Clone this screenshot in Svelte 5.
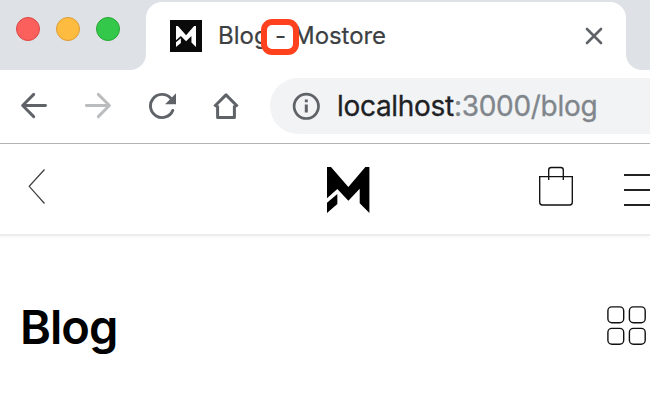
<script>
  const lights = [
    { fill: '#fc605c', edge: '#dd4744' },
    { fill: '#fdbc40', edge: '#dc9c33' },
    { fill: '#34c84a', edge: '#24a732' }
  ];
  const mark =
    'M0 0H12L64 60L115 0H127V138L98 109V65L64 101L31 66L0 94ZM0 107L31 81V111L0 138Z';
</script>

<div class="window">
  <div class="strip">
    <div class="lights">
      {#each lights as l}
        <span class="light" style="background:{l.fill};border-color:{l.edge}"></span>
      {/each}
    </div>
    <svg class="flare" width="16" height="16" viewBox="0 0 16 16"><path d="M16 0V16H0A16 16 0 0 0 16 0Z" fill="#fff" /></svg>
    <div class="tab">
      <span class="favicon">
        <svg width="20" height="21" viewBox="0 0 127 138" preserveAspectRatio="none"><path d={mark} fill="#fff" /></svg>
      </span>
      <span class="title"><span class="w1">Blog</span><i class="marker"></i><span class="dash">-</span><span class="w2">Mostore</span></span>
      <svg class="close" width="18" height="18" viewBox="0 0 18 18"><path d="M2 2L16 16M16 2L2 16" stroke="#5f6368" stroke-width="2.6" stroke-linecap="round" /></svg>
    </div>
    <svg class="flare" width="16" height="16" viewBox="0 0 16 16"><path d="M0 0V16H16A16 16 0 0 1 0 0Z" fill="#fff" /></svg>
  </div>

  <div class="toolbar">
    <svg width="28" height="28" viewBox="0 0 28 28"><path d="M25.5 13.5H3.2M13.7 2.4L2.6 13.5L13.7 24.6" fill="none" stroke="#5f6368" stroke-width="2.9" stroke-linecap="round" stroke-linejoin="round" /></svg>
    <svg width="28" height="28" viewBox="0 0 28 28"><path d="M2.3 13.5H25M14.3 2.4L25.4 13.5L14.3 24.6" fill="none" stroke="#babcbe" stroke-width="2.9" stroke-linecap="round" stroke-linejoin="round" /></svg>
    <svg width="28" height="28" viewBox="0 0 28 28"><path d="M24.8 18.4A11.6 11.6 0 1 1 22.5 6" fill="none" stroke="#5f6368" stroke-width="2.9" stroke-linecap="round" /><path d="M28 1.3V12.2H17.1Z" fill="#5f6368" /></svg>
    <svg width="28" height="28" viewBox="0 0 28 28"><path d="M5.6 13.4V25.5H22.4V13.4M2.4 14.5L14 2.9L25.6 14.5" fill="none" stroke="#5f6368" stroke-width="3" stroke-linecap="butt" stroke-linejoin="round" /></svg>
    <div class="omnibox">
      <svg width="28" height="28" viewBox="0 0 28 28"><circle cx="14.3" cy="14.3" r="12.2" fill="none" stroke="#5f6368" stroke-width="2.7" /><path d="M12.8 7.5H15.8V10.3H12.8ZM12.8 12.6H15.8V20.5H12.8Z" fill="#5f6368" /></svg>
      <span class="url"><span class="host">localhost</span><span class="path">:3000/blog</span></span>
    </div>
  </div>

  <header>
    <svg class="back" width="18" height="38" viewBox="0 0 18 38"><path d="M16.5 2.5L1.2 19.3L16.5 36.5" fill="none" stroke="#3c3c3c" stroke-width="1.2" /></svg>
    <svg class="logo" width="42.4" height="46" viewBox="0 0 127 138" preserveAspectRatio="none"><path d={mark} /></svg>
    <svg class="bag" width="36" height="42" viewBox="0 0 36 42"><path d="M1.7 10.6H34.3V36.3Q34.3 39 31.6 39H4.4Q1.7 39 1.7 36.3ZM10.7 14V4.1Q10.7 1.5 13.3 1.5H22.7Q25.3 1.5 25.3 4.1V14" fill="none" stroke="#111" stroke-width="1.35" /></svg>
    <span class="menu"><i></i><i></i><i></i></span>
  </header>

  <main>
    <h1>Blog</h1>
    <svg class="grid" width="40" height="40" viewBox="0 0 40 40" fill="none" stroke="#111" stroke-width="1.4">
      {#each [0.9, 22.4] as y}
        {#each [0.9, 22.4] as x}
          <rect {x} {y} width="15.8" height="15.8" rx="4" />
        {/each}
      {/each}
    </svg>
  </main>
</div>

<style>
  .window { width: 650px; height: 414px; overflow: hidden; background: #fff; font-family: Inter, "Liberation Sans", sans-serif; }
  svg { display: block; flex: none; }
  .strip { height: 70px; background: #dee1e6; display: flex; align-items: flex-end; box-sizing: border-box; }
  .lights { width: 130px; height: 53px; padding-left: 16px; box-sizing: border-box; display: flex; gap: 16px; flex: none; align-self: flex-start; padding-top: 17px; }
  .light { width: 24px; height: 24px; border-radius: 50%; border: 1px solid; box-sizing: border-box; flex: none; }
  .tab { width: 480px; height: 68px; flex: none; background: #fff; border-radius: 16px 16px 0 0; display: flex; align-items: center; box-sizing: border-box; padding: 0 23px 0 24px; }
  .favicon { width: 32px; height: 32px; background: #0a0a0a; display: flex; align-items: center; justify-content: center; flex: none; }
  .title { position: relative; margin-left: 16px; display: flex; font-size: 24px; line-height: 32px; color: #3c4043; flex: 1; -webkit-text-stroke: 0.2px; }
  .w1 { width: 57px; }
  .dash { width: 18px; position: relative; }
  .w2 { letter-spacing: -0.05px; }
  .marker { position: absolute; left: 43px; top: -1px; width: 38px; height: 36px; border: 6px solid #ff421d; border-radius: 11px; box-sizing: border-box; background: #fff; }
  .toolbar { height: 74px; box-sizing: border-box; border-bottom: 1px solid #b2b4b6; display: flex; align-items: center; padding: 0 0 1px 20px; gap: 36px; }
  .omnibox { flex: 1; height: 56px; margin-left: -6px; border-radius: 28px 0 0 28px; background: #f1f3f4; display: flex; align-items: center; padding-left: 22px; gap: 17px; }
  .url { font-size: 28px; line-height: 36px; white-space: nowrap; letter-spacing: -0.3px; -webkit-text-stroke: 0.3px; }
  .host { color: #202124; }
  .path { color: #80868b; }
  header { height: 92px; box-sizing: border-box; border-bottom: 2px solid #ededed; display: flex; align-items: flex-start; padding-left: 28px; }
  .back { margin-top: 23px; }
  .logo { margin: 23px 0 0 281.3px; }
  .bag { margin: 22px 0 0 168.3px; }
  .menu { margin: 30px 0 0 50px; width: 26px; display: flex; flex-direction: column; gap: 13.5px; }
  .menu i { height: 1.5px; background: #222; }
  main { height: 178px; display: flex; align-items: flex-start; justify-content: space-between; padding: 0 3px 0 20px; background: linear-gradient(#fafafa, #fff 5px); }
  h1 { margin: 62px 0 0; font-size: 47px; line-height: 57px; font-weight: 600; letter-spacing: -1px; color: #000; }
  .grid { margin-top: 70px; }
</style>
